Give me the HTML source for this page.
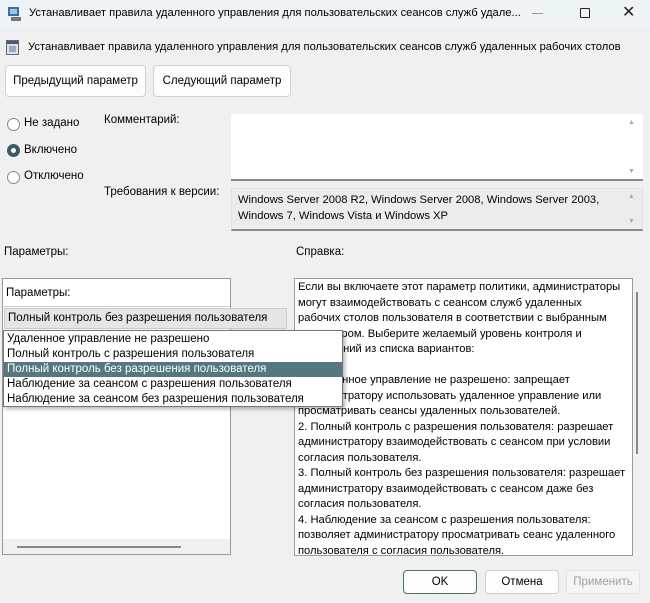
<!DOCTYPE html>
<html><head><meta charset="utf-8"><style>
*{box-sizing:border-box;margin:0;padding:0}
body{width:650px;height:603px;background:#f0f0f0;font-family:"Liberation Sans",sans-serif;font-size:11.5px;color:#000;position:relative;overflow:hidden}
.a{position:absolute;white-space:nowrap}
.btn{position:absolute;background:#fdfdfd;border:1px solid #d0d0d0;border-radius:4px;text-align:center;font-size:11.5px;white-space:nowrap}
.rad{position:absolute;width:13px;height:13px;border:1px solid #8a8a8a;border-radius:50%;background:#fff}
.help div{white-space:nowrap}
</style></head><body>
<div class="a" style="left:0;top:0;width:650px;height:28px;background:#eef3f6"></div>
<svg class="a" style="left:7px;top:6px" width="16" height="16"><rect x="1" y="1" width="11" height="9" fill="#3a6ea5"/><rect x="3" y="3" width="7" height="5" fill="#9cc7ea"/><rect x="4" y="11" width="10" height="4" fill="#777"/></svg>
<div class="a" style="left:29px;top:7px;font-size:11.2px">Устанавливает правила удаленного управления для пользовательских сеансов служб удале...</div>
<div class="a" style="left:532px;top:13px;width:11px;height:1px;background:#999"></div>
<div class="a" style="left:580px;top:8px;width:10px;height:10px;border:1px solid #222;border-radius:1px"></div>
<div class="a" style="left:622px;top:2px;font-size:16px;color:#222">✕</div>
<svg class="a" style="left:6px;top:40px" width="14" height="16"><rect x="0.5" y="0.5" width="12" height="14" fill="#dde" stroke="#667"/><rect x="1" y="1" width="11" height="3" fill="#557"/><rect x="3" y="6" width="7" height="6" fill="#9ab"/></svg>
<div class="a" style="left:28px;top:41px;font-size:11.2px">Устанавливает правила удаленного управления для пользовательских сеансов служб удаленных рабочих столов</div>
<div class="btn" style="left:5px;top:65px;width:141px;height:32px;line-height:30px">Предыдущий параметр</div>
<div class="btn" style="left:153px;top:65px;width:138px;height:32px;line-height:30px">Следующий параметр</div>
<div class="rad" style="left:7px;top:118px"></div><div class="a" style="left:24px;top:117px">Не задано</div>
<div class="rad" style="left:7px;top:144px;border:4px solid #3b5a68"></div><div class="a" style="left:24px;top:144px">Включено</div>
<div class="rad" style="left:7px;top:171px"></div><div class="a" style="left:24px;top:170px">Отключено</div>
<div class="a" style="left:104px;top:114px">Комментарий:</div>
<div class="a" style="left:231px;top:114px;width:412px;height:67px;background:#fff;border-bottom:2px solid #8a8a8a"></div>
<div class="a" style="left:628px;top:119px;font-size:7px;color:#aaa">▲</div><div class="a" style="left:628px;top:168px;font-size:7px;color:#aaa">▼</div>
<div class="a" style="left:104px;top:186px">Требования к версии:</div>
<div class="a" style="left:231px;top:188px;width:412px;height:43px;background:#ececec;border:1px solid #e0e0e0;border-bottom:2px solid #8a8a8a;padding:3px 6px;line-height:16px;font-size:11.2px">Windows Server 2008 R2, Windows Server 2008, Windows Server 2003,<br>Windows 7, Windows Vista и Windows XP</div>
<div class="a" style="left:628px;top:193px;font-size:7px;color:#aaa">▲</div><div class="a" style="left:628px;top:218px;font-size:7px;color:#aaa">▼</div>
<div class="a" style="left:4px;top:246px">Параметры:</div>
<div class="a" style="left:296px;top:246px">Справка:</div>
<div class="a" style="left:2px;top:278px;width:229px;height:277px;background:#fff;border:1px solid #999"></div>
<div class="a" style="left:6px;top:287px">Параметры:</div>
<div class="a" style="left:3px;top:306px;width:227px;height:1px;background:#ccc"></div>
<div class="a" style="left:4px;top:308px;width:283px;height:21px;background:#e5e5e5;border:1px solid #ccc;padding:3px 3px">Полный контроль без разрешения пользователя</div>
<div class="a" style="left:3px;top:539px;width:227px;height:15px;background:#f0f0f0"></div>
<div class="a" style="left:17px;top:546px;width:164px;height:2px;background:#888"></div>
<div class="a" style="left:294px;top:278px;width:339px;height:278px;background:#fff;border:1px solid #999"></div>
<div class="a" style="left:636px;top:292px;width:2px;height:162px;background:#888"></div>
<div class="a help" style="left:298px;top:280px;width:333px;height:274px;overflow:hidden;line-height:15.5px;font-size:11.2px">
<div>Если вы включаете этот параметр политики, администраторы</div>
<div>могут взаимодействовать с сеансом служб удаленных</div>
<div>рабочих столов пользователя в соответствии с выбранным</div>
<div>параметром. Выберите желаемый уровень контроля и</div>
<div>разрешений из списка вариантов:</div>
<div>&nbsp;</div>
<div>1. Удаленное управление не разрешено: запрещает</div>
<div>администратору использовать удаленное управление или</div>
<div>просматривать сеансы удаленных пользователей.</div>
<div>2. Полный контроль с разрешения пользователя: разрешает</div>
<div>администратору взаимодействовать с сеансом при условии</div>
<div>согласия пользователя.</div>
<div>3. Полный контроль без разрешения пользователя: разрешает</div>
<div>администратору взаимодействовать с сеансом даже без</div>
<div>согласия пользователя.</div>
<div>4. Наблюдение за сеансом с разрешения пользователя:</div>
<div>позволяет администратору просматривать сеанс удаленного</div>
<div>пользователя с согласия пользователя.</div>
</div>
<div class="a" style="left:3px;top:330px;width:340px;height:77px;background:#fff;border:1px solid #777;box-shadow:2px 2px 4px rgba(0,0,0,.3);line-height:15px;padding-top:1px;overflow:hidden">
<div style="padding-left:3px">Удаленное управление не разрешено</div>
<div style="padding-left:3px">Полный контроль с разрешения пользователя</div>
<div style="padding-left:3px;background:#55777f;color:#fff">Полный контроль без разрешения пользователя</div>
<div style="padding-left:3px">Наблюдение за сеансом с разрешения пользователя</div>
<div style="padding-left:3px">Наблюдение за сеансом без разрешения пользователя</div>
</div>
<div class="btn" style="left:403px;top:570px;width:74px;height:24px;line-height:22px;border:1px solid #4d6b78">OK</div>
<div class="btn" style="left:485px;top:570px;width:74px;height:24px;line-height:22px">Отмена</div>
<div class="btn" style="left:566px;top:570px;width:74px;height:24px;line-height:22px;color:#a0a0a0;background:#f5f5f5;border-color:#e3e3e3">Применить</div>
</body></html>
